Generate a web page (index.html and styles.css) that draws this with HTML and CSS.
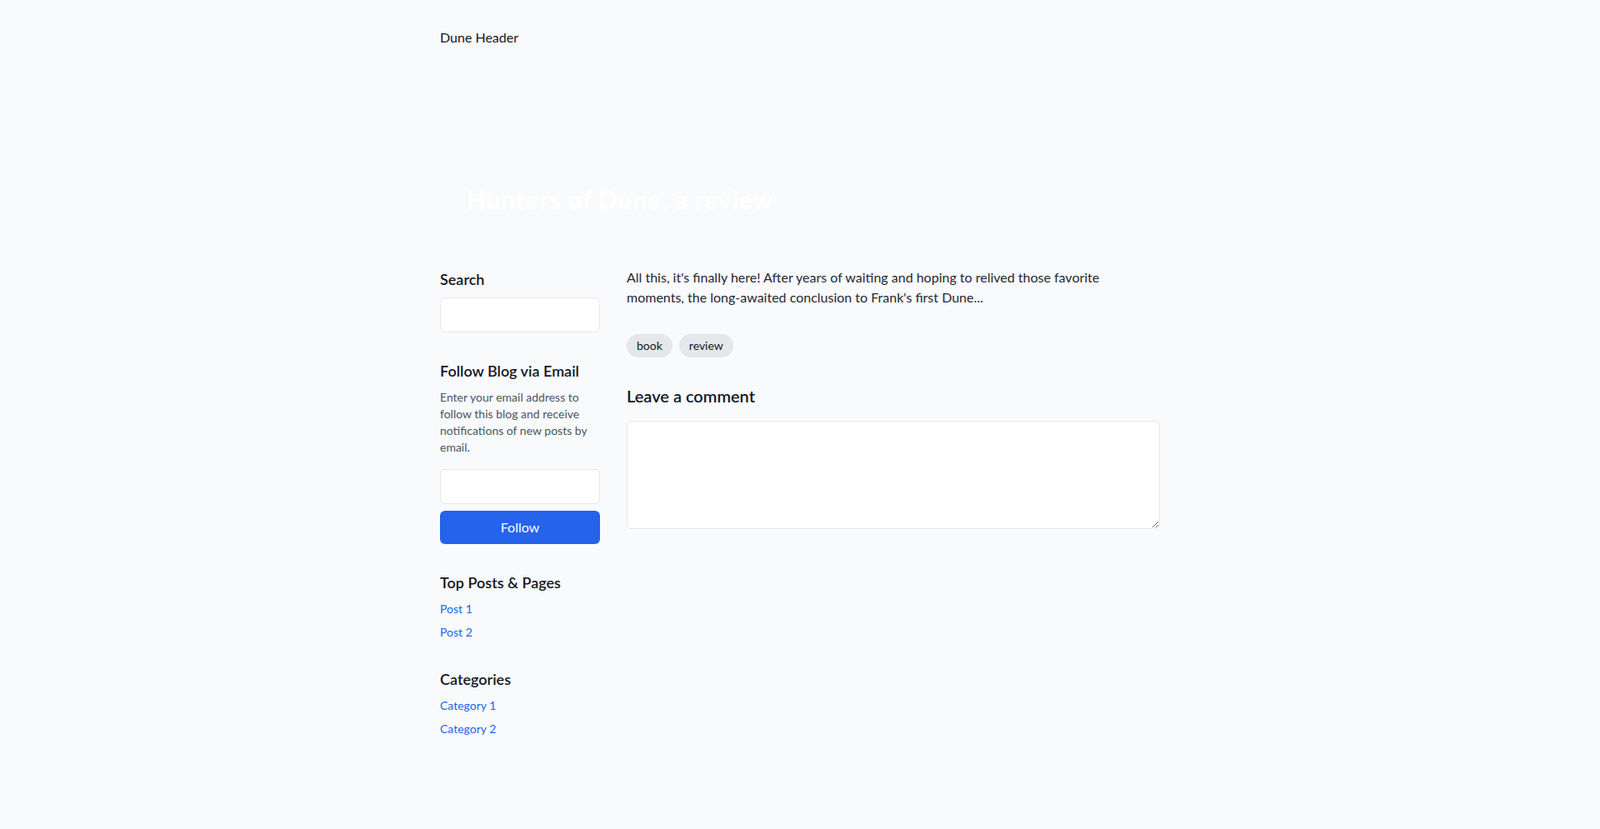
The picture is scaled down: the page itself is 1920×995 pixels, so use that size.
FILE: index.html
```html
<!DOCTYPE html>
<html lang="en">
<head>
<meta charset="utf-8">
<title>Hunters of Dune, a review</title>
<link rel="stylesheet" href="styles.css">
</head>
<body>
<div class="page">
  <header class="site-header">
    <div class="brand">Dune Header</div>
  </header>
  <section class="hero">
    <h1 class="hero-title">Hunters of Dune, a review</h1>
  </section>
  <div class="layout">
    <aside class="sidebar">
      <div class="widget">
        <h3 class="widget-title">Search</h3>
        <input class="field" type="text" aria-label="Search">
      </div>
      <div class="widget">
        <h3 class="widget-title">Follow Blog via Email</h3>
        <p class="widget-text">Enter your email address to follow this blog and receive notifications of new posts by email.</p>
        <input class="field field-email" type="email" aria-label="Email">
        <button class="btn" type="button">Follow</button>
      </div>
      <div class="widget">
        <h3 class="widget-title">Top Posts &amp; Pages</h3>
        <ul class="link-list">
          <li><a href="#">Post 1</a></li>
          <li><a href="#">Post 2</a></li>
        </ul>
      </div>
      <div class="widget">
        <h3 class="widget-title">Categories</h3>
        <ul class="link-list">
          <li><a href="#">Category 1</a></li>
          <li><a href="#">Category 2</a></li>
        </ul>
      </div>
    </aside>
    <main class="content">
      <p class="excerpt">All this, it's finally here! After years of waiting and hoping to relived those favorite moments, the long-awaited conclusion to Frank's first Dune...</p>
      <div class="tags">
        <span class="tag">book</span>
        <span class="tag">review</span>
      </div>
      <h2 class="comment-title">Leave a comment</h2>
      <textarea class="comment-box" aria-label="Comment"></textarea>
    </main>
  </div>
</div>
</body>
</html>
```
FILE: styles.css
```css
* { box-sizing: border-box; }
html, body { margin: 0; padding: 0; }
body {
  background: #f9fafb;
  font-family: "Segoe UI", Lato, "Noto Sans", sans-serif;
  color: #111827;
  font-size: 16px;
  line-height: 24px;
}
.page {
  max-width: 896px;
  margin: 0 auto;
  padding: 0 16px;
}
.site-header {
  padding: 33px 0 32px;
}
.brand { font-size: 16px; line-height: 24px; color: #111827; }
.hero {
  height: 200px;
  display: flex;
  align-items: flex-end;
  padding: 32px;
}
.hero-title {
  margin: 0;
  font-size: 30px;
  line-height: 36px;
  font-weight: 700;
  letter-spacing: 0.8px;
  color: #ffffff;
}
.layout {
  display: flex;
  gap: 32px;
  padding-top: 32px;
  padding-bottom: 32px;
}
.sidebar {
  width: 192px;
  flex-shrink: 0;
  display: flex;
  flex-direction: column;
  gap: 32px;
}
.widget { display: flex; flex-direction: column; }
.widget-title {
  margin: 0;
  font-size: 18px;
  line-height: 28px;
  font-weight: 600;
  color: #111827;
}
.field {
  margin-top: 8px;
  height: 42px;
  width: 100%;
  border: 1px solid #e5e7eb;
  border-radius: 6px;
  background: #ffffff;
  font: inherit;
}
.field-email { margin-top: 16px; }
.widget-text {
  margin: 8px 0 0;
  font-size: 14px;
  line-height: 20px;
  color: #4b5563;
}
.btn {
  margin-top: 8px;
  height: 40px;
  width: 100%;
  border: none;
  border-radius: 6px;
  background: #2563eb;
  color: #ffffff;
  font: inherit;
  font-size: 16px;
}
.link-list {
  list-style: none;
  margin: 8px 0 0;
  padding: 0;
  display: flex;
  flex-direction: column;
  gap: 8px;
  font-size: 14px;
  line-height: 20px;
}
.link-list li { line-height: 20px; }
.link-list a {
  color: #2563eb;
  text-decoration: none;
}
.content { flex: 1; min-width: 0; }
.excerpt {
  margin: 0;
  font-size: 16px;
  line-height: 24px;
  color: #1f2937;
}
.tags {
  display: flex;
  gap: 8px;
  margin-top: 32px;
}
.tag {
  background: #e5e7eb;
  border-radius: 9999px;
  padding: 4px 12px;
  font-size: 14px;
  line-height: 20px;
  color: #111827;
}
.comment-title {
  margin: 32px 0 16px;
  font-size: 20px;
  line-height: 28px;
  font-weight: 600;
  color: #111827;
}
.comment-box {
  display: block;
  width: 100%;
  height: 130px;
  border: 1px solid #e5e7eb;
  border-radius: 6px;
  background: #ffffff;
  font: inherit;
}
```
